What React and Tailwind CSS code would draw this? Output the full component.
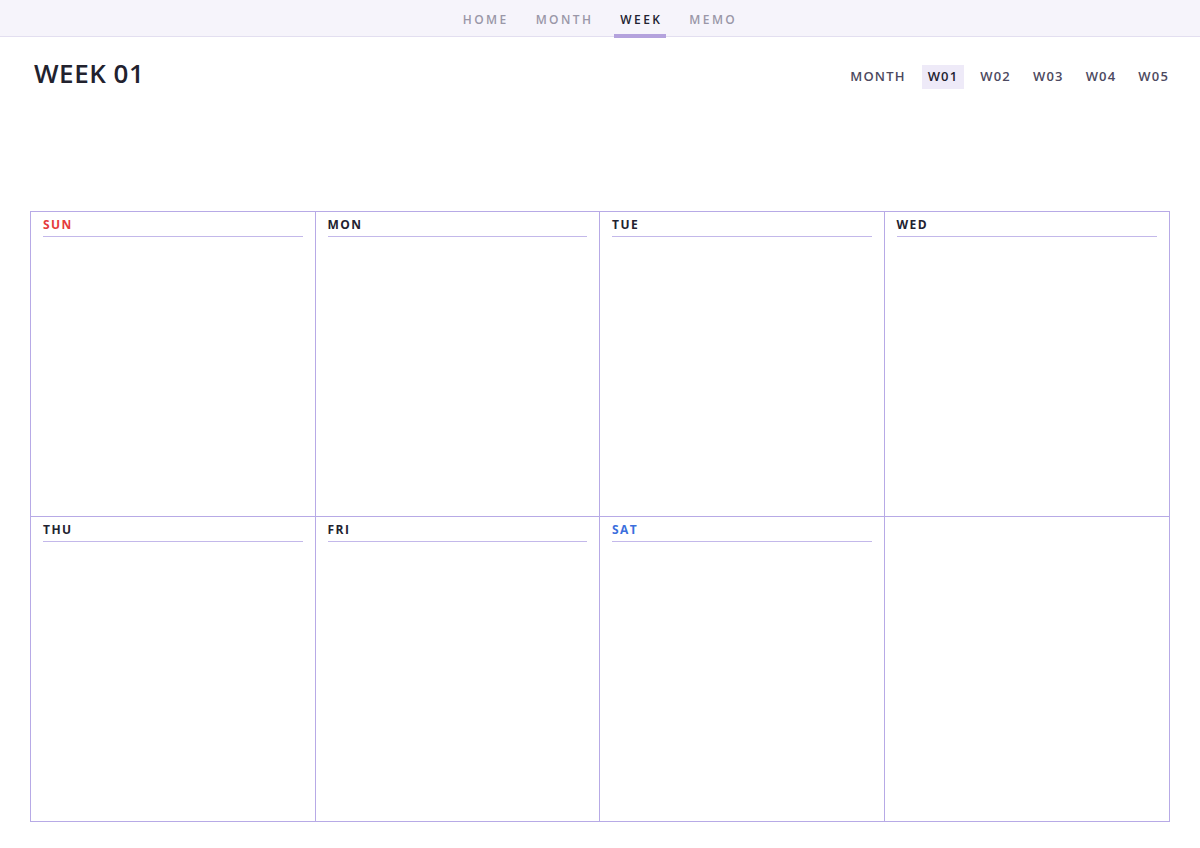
import React from "react";

const font = { fontFamily: '"Open Sans", "Noto Sans", sans-serif' };

function DayCell({ label, color, right, top }) {
  return (
    <div className={`${top ? "h-[305px] border-b" : "h-[304px]"} px-3 pt-[5px] ${right ? "border-r" : ""} border-[#b7aae6]`}>
      {label && (
        <div className={`text-[12px] font-bold tracking-[0.12em] leading-[16px] pb-[3px] border-b border-[#c3b8ea] ${color}`}>
          {label}
        </div>
      )}
    </div>
  );
}

export default function App() {
  const nav = ["HOME", "MONTH", "WEEK", "MEMO"];
  const weeks = ["MONTH", "W01", "W02", "W03", "W04", "W05"];
  const days = [
    { label: "SUN", color: "text-[#e53b3b]" },
    { label: "MON", color: "text-[#222230]" },
    { label: "TUE", color: "text-[#222230]" },
    { label: "WED", color: "text-[#222230]" },
    { label: "THU", color: "text-[#222230]" },
    { label: "FRI", color: "text-[#222230]" },
    { label: "SAT", color: "text-[#3b6fdd]" },
    { label: "", color: "" },
  ];
  return (
    <div className="w-[1200px] h-[848px] bg-white" style={font}>
      <div className="h-[37px] bg-[#f6f4fb] border-b border-[#e3dff0] flex justify-center items-stretch gap-[15px]">
        {nav.map((n) => (
          <div key={n} className="relative flex items-center pt-[3px] px-[6px]">
            <span className={`text-[12px] tracking-[0.2em] font-semibold ${n === "WEEK" ? "text-[#222230] font-bold" : "text-[#9a97a8]"}`}>{n}</span>
            {n === "WEEK" && <div className="absolute left-0 right-[2px] bottom-[-2px] h-[4px] bg-[#b4a2dd]" />}
          </div>
        ))}
      </div>
      <div className="flex items-start justify-between pl-[34px] pr-[25px]">
        <div className="text-[26px] font-semibold tracking-[0.02em] text-[#22222e] leading-[36px] mt-[18px]">WEEK 01</div>
        <div className="flex items-center gap-[10px] mt-[28px]">
          {weeks.map((w) => (
            <div key={w} className={`px-[6px] h-[24px] flex items-center text-[13px] font-semibold tracking-[0.09em] ${w === "W01" ? "bg-[#eeeaf8] text-[#222230] font-bold" : "text-[#4c4960]"}`}>
              {w}
            </div>
          ))}
        </div>
      </div>
      <div className="mx-[30px] mt-[120px] w-[1140px] border border-[#b7aae6] grid grid-cols-4">
        {days.map((d, i) => (
          <DayCell key={i} label={d.label} color={d.color} right={i % 4 !== 3} top={i < 4} />
        ))}
      </div>
    </div>
  );
}
